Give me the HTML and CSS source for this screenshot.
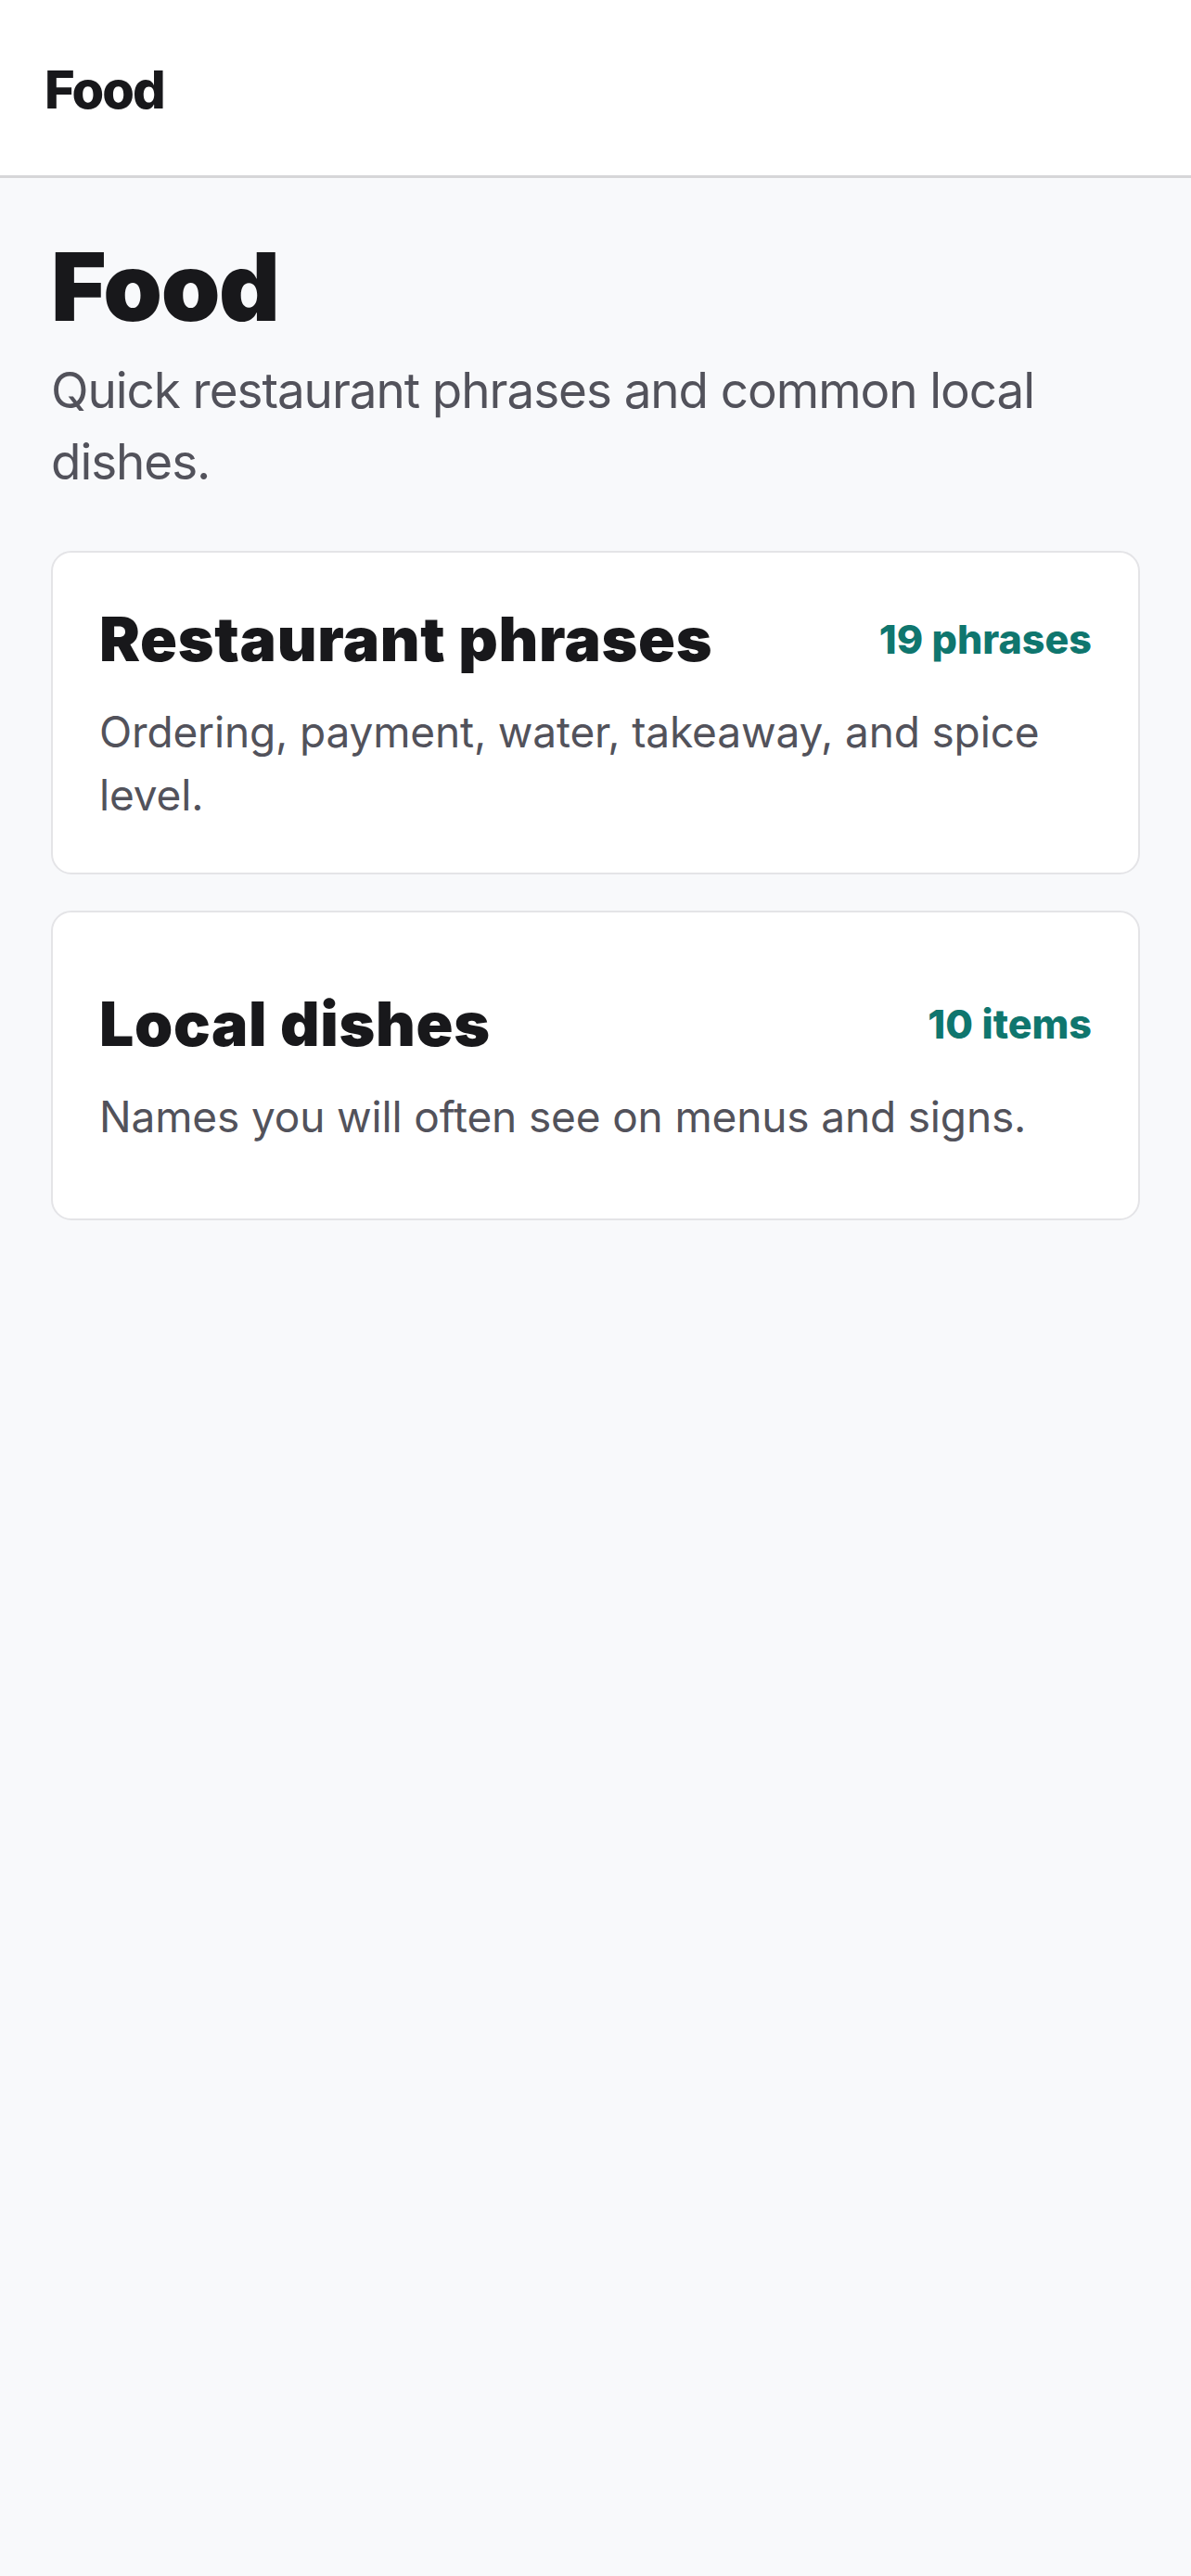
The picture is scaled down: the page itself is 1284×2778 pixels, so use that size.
FILE: index.html
```html
<!DOCTYPE html>
<html lang="en">
  <head>
    <meta charset="UTF-8" />
    <meta name="viewport" content="width=device-width, initial-scale=1.0" />
    <title>Food</title>
    <link rel="stylesheet" href="styles.css">
  </head>
  <body>
    <header class="top-bar">
      <span class="top-bar-title">Food</span>
    </header>

    <main class="page">
      <h1 class="page-title">Food</h1>
      <p class="page-intro">
        Quick restaurant phrases and common local dishes.
      </p>

      <div class="section-list">
        <a class="section-card" href="#restaurant-phrases">
          <div class="section-head">
            <h2 class="section-name">Restaurant phrases</h2>
            <span class="section-count">19 phrases</span>
          </div>
          <p class="section-desc">
            Ordering, payment, water, takeaway, and spice level.
          </p>
        </a>

        <a class="section-card" href="#local-dishes">
          <div class="section-head">
            <h2 class="section-name">Local dishes</h2>
            <span class="section-count">10 items</span>
          </div>
          <p class="section-desc">Names you will often see on menus and signs.</p>
        </a>
      </div>
    </main>
  </body>
</html>
```

FILE: styles.css
```css
body {
  margin: 0;
  min-height: 100vh;
  font-family: Inter, "Noto Sans", sans-serif;
  background: #f8f9fb;
  color: #18181b;
}
.top-bar {
  background: #fff;
  border-bottom: 3px solid #d6d6d8;
  padding: 63px 48px 58px;
}
.top-bar-title {
  display: block;
  font-size: 56px;
  line-height: 68px;
  font-weight: 800;
  letter-spacing: -0.035em;
}
.page {
  padding: 61px 55px 40px;
}
.page-title {
  margin: 0;
  font-size: 102px;
  line-height: 112px;
  font-weight: 900;
  letter-spacing: -0.013em;
}
.page-intro {
  margin: 18px 0 0;
  font-size: 53px;
  line-height: 76.5px;
  color: #52525b;
  letter-spacing: -0.02em;
}
.section-list {
  display: flex;
  flex-direction: column;
  gap: 39px;
  margin-top: 58px;
}
.section-card {
  display: flex;
  flex-direction: column;
  justify-content: center;
  min-height: 334px;
  box-sizing: border-box;
  padding: 50px 50px 50px;
  background: #fff;
  border: 2px solid #e4e4e7;
  border-radius: 22px;
  color: inherit;
  text-decoration: none;
}
.section-head {
  display: flex;
  align-items: center;
  justify-content: space-between;
  gap: 24px;
}
.section-name {
  margin: 0;
  font-size: 66px;
  line-height: 86px;
  font-weight: 900;
  letter-spacing: 0.01em;
}
.section-count {
  font-size: 43px;
  font-weight: 800;
  color: #0f766e;
}
.section-desc {
  margin: 23px 0 0;
  font-size: 46px;
  line-height: 68px;
  color: #52525b;
  letter-spacing: -0.15px;
}
```
